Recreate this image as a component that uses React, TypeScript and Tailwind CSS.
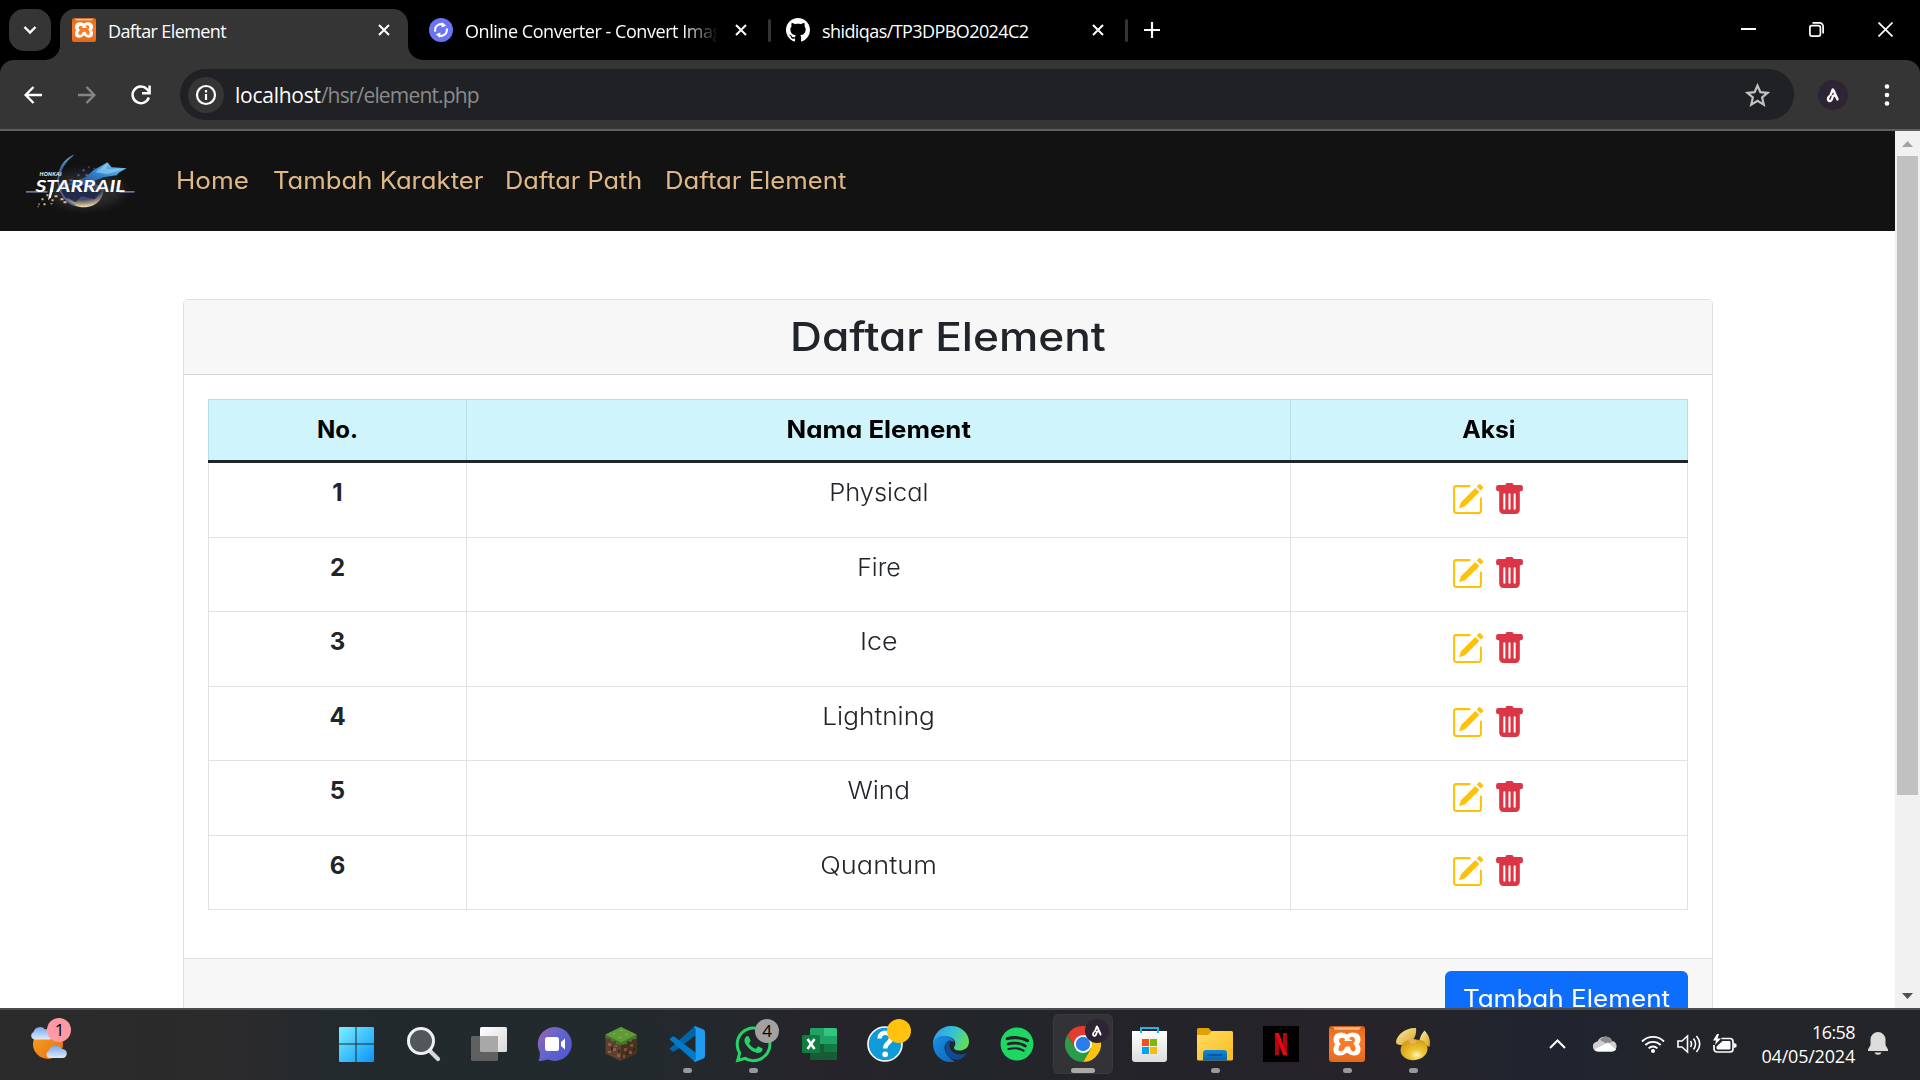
import type { ReactNode } from "react";
import { BsPencilSquare, BsTrashFill } from "react-icons/bs";
import { FaSpotify, FaWhatsapp } from "react-icons/fa";
import { SiXampp } from "react-icons/si";

/* ---------- browser chrome ---------- */

function XamppIcon({ size }: { size: number }) {
  return (
    <svg width={size} height={size} viewBox="0 0 36 36">
      <defs>
        <linearGradient id="xa" x1="0" y1="0" x2="0" y2="1">
          <stop offset="0" stopColor="#c55a18" />
          <stop offset=".12" stopColor="#e8701f" />
          <stop offset=".5" stopColor="#fb7a28" />
          <stop offset="1" stopColor="#e36a1a" />
        </linearGradient>
      </defs>
      <rect width="36" height="36" rx="3" fill="url(#xa)" />
      <path d="M4 1.2h28l-2 2.6H6Z" fill="#f7b98c" />
      <path
        d="M18 14.500C18 9.500 15.500 8.500 12 8.500C8 8.500 6.500 11 6.500 14C6.500 16.500 8 17.500 8.800 18.200C7 20 6.300 22 6.500 24C6.700 26.500 8.500 27.500 11 27.500C15.500 27.500 16.500 25 18 22C19.500 25 20.500 27.500 25 27.500C27.500 27.500 29.300 26.500 29.500 24C29.700 22 29 20 27.200 18.200C28 17.500 29.500 16.500 29.500 14C29.500 11 28 8.500 24 8.500C20.500 8.500 18 9.500 18 14.500Z"
        fill="#fff"
        stroke="#fff"
        strokeWidth="4"
        strokeLinejoin="round"
      />
      <path
        d="M14.500 13.500H12A2 2 0 0 0 12.500 16.500H22A2.500 2.500 0 0 0 24.500 13.500A2 2 0 0 0 22 12.500M14.500 18.500Q11 20 11 23.500Q13.500 24.500 14.500 21Q15.500 19 18 19H22Q22.500 23.500 24.500 24Q26 22 23.500 18.500"
        fill="none"
        stroke="#fb7a28"
        strokeWidth="3"
        strokeLinecap="round"
        strokeLinejoin="round"
      />
    </svg>
  );
}

function GithubIcon() {
  return (
    <svg width="24" height="24" viewBox="0 0 16 16" fill="#fff">
      <path d="M8 0C3.58 0 0 3.58 0 8c0 3.54 2.29 6.53 5.47 7.59.4.07.55-.17.55-.38 0-.19-.01-.82-.01-1.49-2.01.37-2.53-.49-2.69-.94-.09-.23-.48-.94-.82-1.13-.28-.15-.68-.52-.01-.53.63-.01 1.08.58 1.23.82.72 1.21 1.87.87 2.33.66.07-.52.28-.87.51-1.07-1.78-.2-3.64-.89-3.64-3.95 0-.87.31-1.59.82-2.15-.08-.2-.36-1.02.08-2.12 0 0 .67-.21 2.2.82.64-.18 1.32-.27 2-.27s1.36.09 2 .27c1.53-1.04 2.2-.82 2.2-.82.44 1.1.16 1.92.08 2.12.51.56.82 1.27.82 2.15 0 3.07-1.87 3.75-3.65 3.95.29.25.54.73.54 1.48 0 1.07-.01 1.93-.01 2.2 0 .21.15.46.55.38A8.01 8.01 0 0 0 16 8c0-4.42-3.58-8-8-8Z" />
    </svg>
  );
}

function ConverterIcon() {
  return (
    <svg width="24" height="24" viewBox="0 0 24 24" fill="none" stroke="#fff" strokeWidth="2.1">
      <circle cx="12" cy="12" r="12" fill="#6b74f5" stroke="none" />
      <path d="M6.4 13.6A5.8 5.8 0 0 1 14.6 6.8M17.6 10.4A5.8 5.8 0 0 1 9.4 17.2" />
      <path d="M13 4.2l4.2 3.6-4.6 1.6ZM11 19.8l-4.2-3.6 4.6-1.6Z" fill="#fff" stroke="none" />
    </svg>
  );
}

function Cross() {
  return (
    <svg width="12" height="12" viewBox="0 0 12 12" stroke="#fff" strokeWidth="2">
      <path d="M1 1l10 10M11 1L1 11" />
    </svg>
  );
}

function Stroke({ w, h, box, sw = 2, color = "#fff", children }: { w: number; h: number; box: string; sw?: number; color?: string; children: ReactNode }) {
  return (
    <svg width={w} height={h} viewBox={box} fill="none" stroke={color} strokeWidth={sw} className="shrink-0">
      {children}
    </svg>
  );
}

function TabStrip() {
  return (
    <div className="flex h-[60px] bg-black font-['Open_Sans',sans-serif] text-[18px] leading-6 text-white">
      <div className="mt-[9px] ml-[9px] flex h-[42px] w-[42px] items-center justify-center rounded-[15px] bg-[#353535]">
        <Stroke w={14} h={10} box="0 0 14 10" sw={2.4}>
          <path d="M1.5 2L7 7.500L12.500 2" />
        </Stroke>
      </div>
      <svg className="mt-[45px] -ml-[6px] shrink-0" width="15" height="15" viewBox="0 0 15 15">
        <path d="M15 0V15H0A15 15 0 0 0 15 0" fill="#353535" />
      </svg>
      <div className="mt-[9px] flex h-[51px] w-[348px] shrink-0 items-center rounded-t-[15px] bg-[#353535] pr-[18px] pb-[9px] pl-3">
        <XamppIcon size={24} />
        <span className="ml-3 flex-1 pt-px tracking-[-0.600px]">Daftar Element</span>
        <Cross />
      </div>
      <svg className="mt-[45px] shrink-0" width="15" height="15" viewBox="0 0 15 15">
        <path d="M0 0V15H15A15 15 0 0 1 0 0" fill="#353535" />
      </svg>
      <div className="flex h-[60px] w-[348px] shrink-0 items-center pl-[6px]">
        <ConverterIcon />
        <span className="ml-3 w-[253px] pt-px tracking-[-0.45px] whitespace-nowrap [mask-image:linear-gradient(to_right,black_218px,transparent_253px)]">
          Online Converter - Convert Imag
        </span>
        <div className="ml-[17px]">
          <Cross />
        </div>
        <div className="ml-[21px] h-[23px] w-[3px] shrink-0 rounded-full bg-[#353535]" />
      </div>
      <div className="flex h-[60px] items-center pl-[15px]">
        <GithubIcon />
        <span className="ml-3 w-[270px] pt-px tracking-[-0.58px]">shidiqas/TP3DPBO2024C2</span>
        <Cross />
        <div className="ml-[21px] h-[23px] w-[3px] rounded-full bg-[#353535]" />
        <div className="ml-4">
          <Stroke w={16} h={16} box="0 0 16 16" sw={2.2}>
            <path d="M8 0V16M0 8H16" />
          </Stroke>
        </div>
      </div>
      <div className="mr-[27px] ml-auto flex h-[58px] items-center">
        <div className="h-[2px] w-[15px] bg-white" />
        <div className="ml-[53px]">
          <Stroke w={15} h={15} box="0 0 15 15" sw={1.7}>
            <rect x=".9" y="3.600" width="10.500" height="10.500" rx="2" />
            <path d="M3.500 .9H10.500A3.600 3.600 0 0 1 14.100 4.500V11.500" />
          </Stroke>
        </div>
        <div className="ml-[54px]">
          <Stroke w={15} h={15} box="0 0 15 15" sw={1.7}>
            <path d="M.5 .5l14 14M14.500 .5l-14 14" />
          </Stroke>
        </div>
      </div>
    </div>
  );
}

function Toolbar() {
  return (
    <div className="bg-black">
      <div className="flex h-[71px] items-center rounded-t-[14px] border-b-2 border-[#5f5f5f] bg-[#353535] pl-6">
        <Stroke w={18} h={18} box="0 0 18 18" sw={2.400}>
          <path d="M18 9H2M9.500 1L1.600 9L9.500 17" />
        </Stroke>
        <div className="ml-9">
          <Stroke w={18} h={18} box="0 0 18 18" sw={2.400} color="#868686">
            <path d="M0 9H16M8.500 1L16.400 9L8.500 17" />
          </Stroke>
        </div>
        <div className="ml-[35px]">
          <Stroke w={20} h={20} box="0 0 20 20" sw={2.500}>
            <path d="M17.800 12.500A8.300 8.300 0 1 1 16 4.200L18.500 7" />
            <path d="M18.600 0.500V8.200H11" />
          </Stroke>
        </div>
        <div className="ml-[29px] flex h-[51px] w-[1614px] items-center rounded-full bg-[#202124] pr-6 pl-2">
          <div className="flex h-9 w-9 items-center justify-center rounded-full bg-[#353535] pr-px">
            <Stroke w={22} h={22} box="0 0 22 22" sw={2.200}>
              <circle cx="11" cy="11" r="9" />
              <path d="M11 10v6M11 6v2.400" />
            </Stroke>
          </div>
          <div className="ml-[11px] flex-1 font-['Open_Sans',sans-serif] text-[21px] leading-7 text-[#8a8b8e]">
            <span className="tracking-[-0.25px] text-white">localhost</span>
            <span className="tracking-[-0.830px]">/hsr/element.php</span>
          </div>
          <Stroke w={25} h={24} box="0 0 25 24" sw={2.200} color="#c2c2c3">
            <path d="M12.500 2.600L15.400 9.200L22.600 9.800L17.100 14.500L18.800 21.600L12.500 17.800L6.200 21.600L7.900 14.500L2.400 9.800L9.600 9.200Z" />
          </Stroke>
        </div>
        <div className="ml-6">
          <Monogram size={30} />
        </div>
        <svg className="ml-9" width="6" height="24" viewBox="0 0 6 24" fill="#fff">
          <circle cx="3" cy="3.500" r="2.300" />
          <circle cx="3" cy="12" r="2.300" />
          <circle cx="3" cy="20.500" r="2.300" />
        </svg>
      </div>
    </div>
  );
}

function Monogram({ size }: { size: number }) {
  return (
    <svg width={size} height={size} viewBox="0 0 30 30" className="block">
      <circle cx="15" cy="15" r="15" fill="#2d2533" />
      <path d="M11 16.500C8.500 20 11 22 13 20.500C15 19 14 16 15.500 15.500C18 15 18.500 17 19.500 19.500M12.500 15C14 12 14.500 9 15 9.500C16 11 17 14 19.500 19" fill="none" stroke="#fff" strokeWidth="2.300" strokeLinecap="round" />
    </svg>
  );
}

/* ---------- page ---------- */

function StarRailLogo() {
  return (
    <svg width="124" height="64" viewBox="0 0 124 64">
      <defs>
        <linearGradient id="comet" x1="0" y1="1" x2="1" y2="0">
          <stop offset="0" stopColor="#2f56a8" stopOpacity=".5" />
          <stop offset=".5" stopColor="#2f80cf" />
          <stop offset="1" stopColor="#8fd8f5" />
        </linearGradient>
        <linearGradient id="ring" x1="0" y1="0" x2="0" y2="1">
          <stop offset="0" stopColor="#5fb4d8" />
          <stop offset=".5" stopColor="#3f5fae" />
          <stop offset="1" stopColor="#6a78c0" />
        </linearGradient>
        <radialGradient id="moon" cx=".5" cy=".2" r=".8">
          <stop offset="0" stopColor="#2b3a6c" />
          <stop offset=".6" stopColor="#4a4c63" />
          <stop offset=".85" stopColor="#bba98c" />
          <stop offset="1" stopColor="#f3e0b8" />
        </radialGradient>
        <filter id="glow" x="-50%" y="-50%" width="200%" height="200%">
          <feGaussianBlur stdDeviation="5" />
        </filter>
      </defs>
      <g transform="translate(-.5 1.300)">
        <ellipse cx="72" cy="40" rx="38" ry="18" fill="#fff" opacity=".1" filter="url(#glow)" />
        <path d="M46 36C46 48 58 57 70 57C84 57 91 47 90 36C82 33 58 32 46 36" fill="url(#moon)" />
        <path d="M48 40l10-6 5 5 7-6 4 8 8-2 6 2-7 8-13-3-6 6-7-4-8 1Z" fill="#1a2140" opacity=".75" />
        <path d="M60 5C50 9 45 17 44.500 31C46.500 20 51 12 60 5Z" fill="url(#ring)" stroke="#4c8fc0" strokeWidth=".6" />
        <path d="M44.500 28C45 42 52 52 62 55.500" fill="none" stroke="#59649b" strokeWidth="1.500" />
        <path d="M53 34L72 27L80 20L94 12L98 17L113 18L106 22L103 25L90 27L80 31L84 36Z" fill="url(#comet)" />
        <path d="M82 22L94 13L93 19L108 19L94 24Z" fill="#a4e2f8" opacity=".5" />
        <g fill="#d9c08c">
          <path d="M28 48h2v2h-2zM33 44h2v2h-2zM30 53h2v2h-2zM38 49h2v2h-2zM41 45h3v2h-3zM47 48h3v2h-3zM25 53h1v2h-1zM37 53h2v1h-2zM50 51h3v2h-3zM24 56h1v1h-1z" />
        </g>
        <g fill="#4c63a8">
          <path d="M69 19h2v2h-2zM75 16h1v2h-1zM80 18h2v1h-2zM64 24h2v2h-2zM72 24h3v2h-3zM56 29h3v2h-3zM49 33h3v3h-3z" />
        </g>
        <path d="M12.500 41.500H34M106 41.500H121" stroke="#9298c4" strokeWidth="1.200" />
        <text x="26" y="26" fill="#fff" fontFamily="Lato" fontWeight="700" fontStyle="italic" fontSize="5.500" textLength="22">HONKAI</text>
        <text x="22" y="41.500" fill="#fff" fontFamily="Lato" fontWeight="700" fontStyle="italic" fontSize="17.500" textLength="90" lengthAdjust="spacingAndGlyphs">STARRAIL</text>
        <path d="M37 38L34.500 50L37.500 47L40 37Z" fill="#fff" />
      </g>
    </svg>
  );
}

function Navbar() {
  return (
    <nav className="flex h-[100px] items-center bg-[#121212] pl-[14px] text-[#deb887]">
      <StarRailLogo />
      <div className="ml-[38px] flex whitespace-nowrap">
        <a className="w-[97px]"><span className="inline-block origin-left scale-x-[1.085]">Home</span></a>
        <a className="w-[232px]"><span className="inline-block origin-left scale-x-[1.07]">Tambah Karakter</span></a>
        <a className="w-[160px]"><span className="inline-block origin-left scale-x-[1.055]">Daftar Path</span></a>
        <a><span className="inline-block origin-left scale-x-[1.07]">Daftar Element</span></a>
      </div>
    </nav>
  );
}

const rows = [
  { name: "Physical", stretch: "scale-x-[1.06]", height: "h-[75px]", icon: "pt-5" },
  { name: "Fire", stretch: "scale-x-[1.04]", height: "h-[74px]", icon: "pt-[19px]" },
  { name: "Ice", stretch: "scale-x-[1.12]", height: "h-[75px]", icon: "pt-5" },
  { name: "Lightning", stretch: "scale-x-[1.09]", height: "h-[74px]", icon: "pt-[19px]" },
  { name: "Wind", stretch: "scale-x-[1.09]", height: "h-[75px]", icon: "pt-5" },
  { name: "Quantum", stretch: "scale-x-[1.13]", height: "h-[74px]", icon: "pt-[19px]" },
];

function ElementTable() {
  return (
    <div className="w-[1480px] text-center text-[#212529]">
      <div className="grid h-[64px] grid-cols-[259px_824px_397px] border-t border-b-3 border-t-[#badce3] border-b-[#212529] bg-[#cff4fc] leading-[59px] font-bold text-black">
        <div className="border-x border-[#badce3]">No.</div>
        <div className="border-r border-[#badce3]"><span className="inline-block scale-x-[1.075]">Nama Element</span></div>
        <div className="border-r border-[#badce3]"><span className="inline-block scale-x-[1.03]">Aksi</span></div>
      </div>
      {rows.map((row, i) => (
        <div key={row.name} className={`grid grid-cols-[259px_824px_397px] border-b border-[#dee2e6] leading-[59px] ${row.height}`}>
          <div className="border-x border-[#dee2e6] font-bold">{i + 1}</div>
          <div className="border-r border-[#dee2e6] font-light">
            <span className={`inline-block ${row.stretch}`}>{row.name}</span>
          </div>
          <div className={`flex justify-center gap-[9px] border-r border-[#dee2e6] pr-[2px] ${row.icon}`}>
            <BsPencilSquare size={33} color="#ffc107" />
            <BsTrashFill size={33} color="#dc3545" />
          </div>
        </div>
      ))}
    </div>
  );
}

function Page() {
  return (
    <div className="flex h-[877px] overflow-hidden bg-white font-['Inter',sans-serif] text-[24px] [font-feature-settings:'cv11']">
      <div className="h-full w-[1895px] overflow-hidden">
        <Navbar />
        <div className="mt-[68px] ml-[183px] h-[760px] w-[1530px] overflow-hidden rounded-[5px] border border-[#dfdfdf]">
          <h1 className="h-[75px] border-b border-[#d8d8d8] bg-[#f7f7f7] text-center text-[40px] leading-[74px] font-medium text-[#212529]">
            <span className="inline-block scale-x-[1.105]">Daftar Element</span>
          </h1>
          <div className="flex h-[583px] justify-center pt-6">
            <ElementTable />
          </div>
          <div className="flex h-[110px] justify-end border-t border-[#dfdfdf] bg-[#f7f7f7] pt-3 pr-6">
            <button className="h-14 w-[243px] rounded-[6px] bg-[#0d6efd] leading-[56px] whitespace-nowrap text-white">
              <span className="inline-block scale-x-[1.085]">Tambah Element</span>
            </button>
          </div>
        </div>
      </div>
      <div className="flex h-full w-[25px] flex-col items-center bg-[#f1f1f1]">
        <svg width="25" height="25" viewBox="0 0 25 25">
          <path d="M7 16L12.500 10L18 16Z" fill="#a3a3a3" />
        </svg>
        <div className="h-[639px] w-[21px] bg-[#c1c1c1]" />
        <svg className="mt-auto" width="25" height="25" viewBox="0 0 25 25">
          <path d="M7 10L12.500 16L18 10Z" fill="#505050" />
        </svg>
      </div>
    </div>
  );
}

/* ---------- taskbar ---------- */

function Svg({ children }: { children: ReactNode }) {
  return (
    <svg width="36" height="36" viewBox="0 0 36 36" className="block">
      {children}
    </svg>
  );
}

function Grad({ id, a, b, flat }: { id: string; a: string; b: string; flat?: boolean }) {
  return (
    <linearGradient id={id} x1="0" y1="0" x2={flat ? "0" : "1"} y2="1">
      <stop offset="0" stopColor={a} />
      <stop offset="1" stopColor={b} />
    </linearGradient>
  );
}

const WindowsIcon = () => (
  <Svg>
    <linearGradient id="win" gradientUnits="userSpaceOnUse" x1="0" y1="0" x2="36" y2="36">
      <stop offset="0" stopColor="#7cf3ff" />
      <stop offset="1" stopColor="#0a94fb" />
    </linearGradient>
    <path transform="translate(-1 0)" fill="url(#win)" d="M2 1H17.500V17.500H1V2A1 1 0 0 1 2 1ZM18.500 1H35A1 1 0 0 1 36 2V17.500H18.500ZM1 18.500H17.500V36H2A1 1 0 0 1 1 35ZM18.500 18.500H36V35A1 1 0 0 1 35 36H18.500Z" />
  </Svg>
);

const SearchIcon = () => (
  <Svg>
    <path d="M25 25L33 33" stroke="#d5d8dc" strokeWidth="4.200" strokeLinecap="round" />
    <circle cx="16" cy="15" r="12.500" fill="#52575b" stroke="#f0f1f2" strokeWidth="3" />
  </Svg>
);

const TaskViewIcon = () => (
  <Svg>
    <Grad id="tv" a="#ffffff" b="#d9d9d9" />
    <rect x="9" y="1" width="27" height="25" rx="1.500" fill="url(#tv)" />
    <rect x="0" y="10" width="27" height="25" rx="1.500" fill="#606060" />
    <path d="M9 10H27V26H10.500A1.500 1.500 0 0 1 9 24.500Z" fill="#a8a8a8" />
  </Svg>
);

const ChatIcon = () => (
  <Svg>
    <linearGradient id="chat" x1="0" y1="0" x2="1" y2=".7">
      <stop offset="0" stopColor="#a066a8" />
      <stop offset=".5" stopColor="#6265cc" />
      <stop offset="1" stopColor="#5458cf" />
    </linearGradient>
    <path d="M18 1A17 17 0 1 1 11 33.600Q6 35.300 1.500 35Q3.300 31 2.800 26A17 17 0 0 1 18 1Z" fill="url(#chat)" />
    <rect x="8" y="11" width="14" height="14" rx="2.500" fill="#fff" />
    <path d="M24 16L28 12.500V23.500L24 20Z" fill="#fff" />
  </Svg>
);

const BlockIcon = () => (
  <Svg>
    <path d="M2.500 8.500L18 1L33.500 8.500V27.500L18 35L2.500 27.500Z" fill="#5d4030" />
    <path d="M18 17V35L33.500 27.500V9Z" fill="#49311f" />
    <path d="M2.500 8.500L18 1L33.500 8.500V13L29 13.500V16L24 15V18L18 19L13 18V15L8 15.500V12.500L2.500 12Z" fill="#47762a" />
    <path d="M2.500 8.500L18 1L33.500 8.500L18 16.500Z" fill="#5f9a37" />
    <path d="M10 7h2v1h-2zM17 4h3v1h-3zM22 8h3v1h-3zM16 11h3v1h-3z" fill="#7cb84c" />
    <path d="M5 17h3v3H5zM10 22h3v3h-3zM5 25h3v2H5zM14 28h3v3h-3zM12 19h2v2h-2z" fill="#8a6346" />
    <path d="M21 22h3v3h-3zM27 18h3v3h-3zM26 25h3v3h-3zM20 29h2v3h-2z" fill="#76533a" />
    <path d="M8 21h2v3H8zM15 24h2v2h-2zM23 26h2v3h-2zM30 22h2v3h-2z" fill="#35251a" />
  </Svg>
);

const CodeIcon = () => (
  <Svg>
    <path d="M26 0L0.500 22.800L3.500 25.600Q4.500 26.100 5.500 25.300L27 9Z" fill="#0065a9" />
    <path d="M26 36L0.500 13.200L3.500 10.400Q4.500 9.900 5.500 10.700L27 27Z" fill="#007acc" />
    <path d="M26 0L34.500 3.600Q36 4.400 36 6V30Q36 31.600 34.500 32.400L26 36Q24.500 35.800 26.500 33V3Q24.500 .2 26 0Z" fill="#1f9cf0" />
  </Svg>
);

const ExcelIcon = () => (
  <Svg>
    <rect x="9" y="2" width="27" height="32" rx="1.500" fill="#185c37" />
    <path d="M10.500 2H23V10H9V3.500Q9 2 10.500 2ZM9 10H23V18H9Z" fill="#21a366" />
    <path d="M23 2H34.500Q36 2 36 3.500V10H23Z" fill="#33c481" />
    <path d="M23 10H36V18H23Z" fill="#21a366" />
    <path d="M9 18H23V26H9Z" fill="#185c37" />
    <path d="M23 18H36V26H23Z" fill="#107c41" />
    <rect x="1" y="9" width="18" height="18" rx="1.500" fill="#107c41" />
    <path d="M6.500 13L13.500 23M13.500 13L6.500 23" stroke="#fff" strokeWidth="2.600" />
  </Svg>
);

const HelpIcon = () => (
  <Svg>
    <circle cx="18" cy="18" r="17" fill="#0f9bd7" stroke="#fff" strokeWidth="1.600" />
    <path d="M12.500 12.500C12.500 4.500 24.500 5.500 24 12.500C23.600 17 18 17 18.200 22.500" fill="none" stroke="#fff" strokeWidth="4.500" />
    <circle cx="18.200" cy="28.300" r="2.900" fill="#fff" />
  </Svg>
);

const EdgeIcon = () => (
  <Svg>
    <linearGradient id="edgeTop" x1="0" y1=".3" x2="1" y2=".6">
      <stop offset="0" stopColor="#2f9fe6" />
      <stop offset=".5" stopColor="#35c1d8" />
      <stop offset="1" stopColor="#66e04f" />
    </linearGradient>
    <linearGradient id="edgeBottom" x1="0" y1="0" x2="1" y2="1">
      <stop offset="0" stopColor="#1b8fe0" />
      <stop offset="1" stopColor="#0b66c0" />
    </linearGradient>
    <path d="M0 18C0 8 8 0 18 0C29 0 36 8 36 15.500C36 22 31 24.500 26.500 24.500C22 24.500 20 22.500 21.500 20.500C25 15 18 8.500 10.500 11C4 13 0 18 0 18Z" fill="url(#edgeTop)" />
    <path d="M0 18C1 11.500 8 8.500 14 10.200C19 11.500 21 14 21 16C14 12 9 20 13 27C16 33 22 35.500 22 35.500C10 38.500 0 29 0 18Z" fill="url(#edgeBottom)" />
    <path d="M14 15.500C10 21 14 35 25 33.800C29 33 32 30 33.500 27C24 31.500 15 25 16.500 18C16.900 16.500 18 14.500 18 14.500C16.500 14 15 14.500 14 15.500Z" fill="#114a94" />
  </Svg>
);

const ChromeIcon = () => (
  <Svg>
    <path d="M18 18L2.410 9A18 18 0 0 1 33.590 9Z" fill="#e23d30" />
    <path d="M18 9H33.590A18 18 0 0 1 18 36L25.800 22.500Z" fill="#fcc40d" />
    <path d="M2.410 9L10.200 22.500L18 18L18 9Z" fill="#e23d30" />
    <path d="M2.410 9A18 18 0 0 0 18 36L25.800 22.500H10.200Z" fill="#2b9d4a" />
    <circle cx="18" cy="18" r="9" fill="#fff" />
    <circle cx="18" cy="18" r="7.200" fill="#2d7cec" />
  </Svg>
);

const StoreIcon = () => (
  <Svg>
    <Grad id="store" a="#ffffff" b="#dcdcdc" flat />
    <path d="M1 5H36V33A3 3 0 0 1 33 36H4A3 3 0 0 1 1 33Z" fill="url(#store)" />
    <path d="M10 7V2H27V7" fill="none" stroke="#28b2ea" strokeWidth="2" />
    <path d="M11 13h7v7h-7z" fill="#f25022" />
    <path d="M19 13h7v7h-7z" fill="#7fba00" />
    <path d="M11 21h7v7h-7z" fill="#00a4ef" />
    <path d="M19 21h7v7h-7z" fill="#ffb900" />
  </Svg>
);

const ExplorerIcon = () => (
  <Svg>
    <Grad id="fold" a="#ffdc66" b="#fbbc1a" />
    <Grad id="foldBlue" a="#1688d8" b="#0763b3" flat />
    <path d="M0 3.500Q0 2 1.500 2H11.500L15.500 6H20V14H0Z" fill="#e0a008" />
    <path d="M0 9H11L15 5H34.500Q36 5 36 6.500V33Q36 34.500 34.500 34.500H1.500Q0 34.500 0 33Z" fill="url(#fold)" />
    <path d="M6 34.500V27Q6 24 9 24H27Q30 24 30 27V34.500Z" fill="url(#foldBlue)" />
    <path d="M11 29H25" stroke="#0a4c8d" strokeWidth="1.600" strokeLinecap="round" />
  </Svg>
);

const NetflixIcon = () => (
  <Svg>
    <rect width="36" height="36" fill="#000" />
    <path d="M12 7H16V29L12 29.500ZM20 7H24V29.500L20 29Z" fill="#b1060f" />
    <path d="M12 7H16L24 29.500L20 29Z" fill="#e50914" />
  </Svg>
);

const NavicatIcon = () => (
  <Svg>
    <radialGradient id="gold" cx=".6" cy=".75" r=".75">
      <stop offset="0" stopColor="#fff6cf" />
      <stop offset=".3" stopColor="#f1c93c" />
      <stop offset="1" stopColor="#d09a10" />
    </radialGradient>
    <Grad id="ear" a="#fdf0b8" b="#d79f12" />
    <path d="M21 2C22 8 19 17 10 18.500C5 19.500 1 19 1 16C2 8 12 1 21 2Z" fill="url(#ear)" />
    <path d="M29.500 4.500C34 9 36 15 34.500 21C31 19 26 17 24 16C25 11 27 7 29.500 4.500Z" fill="url(#ear)" />
    <path d="M6 21C8 14 17 12 24 14C30 14 33 19 32.500 24C31 32 22 35 16 34C9 33 4 28 6 21Z" fill="url(#gold)" />
    <path d="M13 15C16 12 21 13 22 15C20 19 15 18 13 15Z" fill="#f0bb84" opacity=".6" />
  </Svg>
);

const WeatherIcon = () => (
  <svg width="38" height="36" viewBox="0 0 38 36">
    <Grad id="sun" a="#f5a81d" b="#ea6a18" />
    <Grad id="cl" a="#7aa7ee" b="#dfeafc" flat />
    <circle cx="18" cy="18" r="15" fill="url(#sun)" />
    <path d="M4 13.500A4 4 0 0 1 3.500 6A6.500 6.500 0 0 1 15.500 4.500A5 5 0 0 1 20 13.500Z" fill="url(#cl)" />
    <path d="M19 32A4 4 0 0 1 19 24.500A7 7 0 0 1 31.500 23A4.500 4.500 0 0 1 33 32Z" fill="url(#cl)" />
  </svg>
);

type TaskbarApp = { id: string; icon: ReactNode; running?: boolean; active?: boolean; badge?: ReactNode };

const apps: TaskbarApp[] = [
  { id: "start", icon: <WindowsIcon /> },
  { id: "search", icon: <SearchIcon /> },
  { id: "taskview", icon: <TaskViewIcon /> },
  { id: "chat", icon: <ChatIcon /> },
  { id: "minecraft", icon: <BlockIcon /> },
  { id: "vscode", icon: <CodeIcon />, running: true },
  {
    id: "whatsapp",
    icon: <FaWhatsapp size={41} color="#25d366" className="-m-[2.500px]" />,
    running: true,
    badge: <div className="h-6 w-6 rounded-full bg-[#a3a19f] text-center font-['Open_Sans',sans-serif] text-[17px] leading-6 text-black">4</div>,
  },
  { id: "excel", icon: <ExcelIcon /> },
  { id: "help", icon: <HelpIcon />, badge: <div className="h-6 w-6 rounded-full bg-[#ffc20e]" /> },
  { id: "edge", icon: <EdgeIcon /> },
  { id: "spotify", icon: <FaSpotify size={34} color="#1ed760" /> },
  { id: "chrome", icon: <ChromeIcon />, active: true, badge: <Monogram size={24} /> },
  { id: "store", icon: <StoreIcon /> },
  { id: "explorer", icon: <ExplorerIcon />, running: true },
  { id: "netflix", icon: <NetflixIcon /> },
  { id: "xampp", icon: <XamppIcon size={36} />, running: true },
  { id: "navicat", icon: <NavicatIcon />, running: true },
];

function Tray() {
  return (
    <div className="mr-[32px] ml-auto flex h-[68px] items-center">
      <Stroke w={17} h={10} box="0 0 17 10" sw={2}>
        <path d="M1 9L8.500 1.500L16 9" />
      </Stroke>
      <svg className="ml-[27px]" width="24" height="16" viewBox="0 0 24 16">
        <path d="M5 15.500A5 5 0 0 1 4.500 5.500A8 8 0 0 1 19 5A5.300 5.300 0 0 1 19 15.500Z" fill="#cfcfcf" />
        <path d="M7 4A7 7 0 0 1 19.500 5.500L14 8Z" fill="#8b8b8b" />
        <path d="M1.500 13.500L15 6.500L23 13.500Q21.500 15.500 19 15.500H5Q2.800 15.500 1.500 13.500Z" fill="#fff" />
      </svg>
      <div className="ml-6">
        <Stroke w={24} h={20} box="0 0 24 20" sw={1.800}>
          <path d="M1 7.500A15.500 15.500 0 0 1 23 7.500M4.300 11A11 11 0 0 1 19.700 11M7.600 14.300A6.300 6.300 0 0 1 16.400 14.300" />
          <circle cx="12" cy="17" r="2" fill="#fff" stroke="none" />
        </Stroke>
      </div>
      <div className="ml-3">
        <Stroke w={25} h={20} box="0 0 25 20" sw={1.600}>
          <path d="M1 7H5L10.500 2V18L5 13H1ZM13.500 7Q15.500 10 13.500 13M16.500 4.500Q20.500 10 16.500 15.500M19.500 2Q26 10 19.500 18" />
        </Stroke>
      </div>
      <div className="ml-[10px]">
        <Stroke w={25} h={20} box="0 0 25 20" sw={1.700}>
          <path d="M9.500 4.500H18A3 3 0 0 1 21 7.500V15A3 3 0 0 1 18 18H5A3 3 0 0 1 2 15V11" />
          <path d="M10.500 7H17.500Q18.500 7 18.500 8V14.500Q18.500 15.500 17.500 15.500H6Q4.500 15.500 4.500 14V12.500Z" fill="#fff" stroke="none" />
          <path d="M22 9L24.500 10V13L22 14Z" fill="#fff" stroke="none" />
          <path d="M5 0L1 6.500H4L3 11L9 4.500H5.500L7 0Z" fill="#fff" stroke="none" />
        </Stroke>
      </div>
      <div className="w-[118px] pb-px text-right font-['Open_Sans',sans-serif] text-[18px] leading-6 text-white">
        <div className="tracking-[-0.600px]">16:58</div>
        <div className="tracking-[-0.200px]">04/05/2024</div>
      </div>
      <svg className="ml-[13px]" width="20" height="24" viewBox="0 0 20 24" fill="#dddddb">
        <path d="M10 0A7.500 7.500 0 0 1 17.500 7.500V13L20 17.500V19H0V17.500L2.500 13V7.500A7.500 7.500 0 0 1 10 0ZM6.500 20.500H13.500A3.600 3 0 0 1 6.500 20.500Z" />
      </svg>
    </div>
  );
}

function Taskbar() {
  return (
    <footer className="flex h-[72px] border-t-2 border-[#4a4b4d] bg-[linear-gradient(90deg,#2a2b2a_0,#2b2a2c_240px,#222a2d_350px,#23292d_680px,#26242a_840px,#222629_960px,#242329_1150px,#26242a_1400px,#1f2430_1560px,#232529_1680px,#232528_1920px)]">
      <div className="relative flex w-[323px] shrink-0 pt-4 pl-[30px]">
        <WeatherIcon />
        <div className="absolute top-2 left-[47px] h-6 w-6 rounded-full bg-[#ff99a4] pl-px text-center font-['Open_Sans',sans-serif] text-[17px] leading-6 text-black">1</div>
      </div>
      {apps.map((app) => (
        <div
          key={app.id}
          className={`relative mt-1 mr-[2px] ml-1 flex h-[60px] w-[60px] shrink-0 flex-col items-center rounded-[6px] pt-3 ${app.active ? "bg-[#323237] ring-1 ring-[#3a3a3e] ring-inset" : ""}`}
        >
          <div className="flex h-9 items-center">{app.icon}</div>
          {app.running && <div className="mt-[6px] h-[5px] w-[9px] rounded-full bg-[#98999b]" />}
          {app.active && <div className="mt-[6px] h-[5px] w-6 rounded-full bg-[#aba9a6]" />}
          {app.badge && <div className="absolute top-[5px] right-1">{app.badge}</div>}
        </div>
      ))}
      <Tray />
    </footer>
  );
}

export default function App() {
  return (
    <div className="h-[1080px] w-[1920px] overflow-hidden">
      <TabStrip />
      <Toolbar />
      <Page />
      <Taskbar />
    </div>
  );
}
